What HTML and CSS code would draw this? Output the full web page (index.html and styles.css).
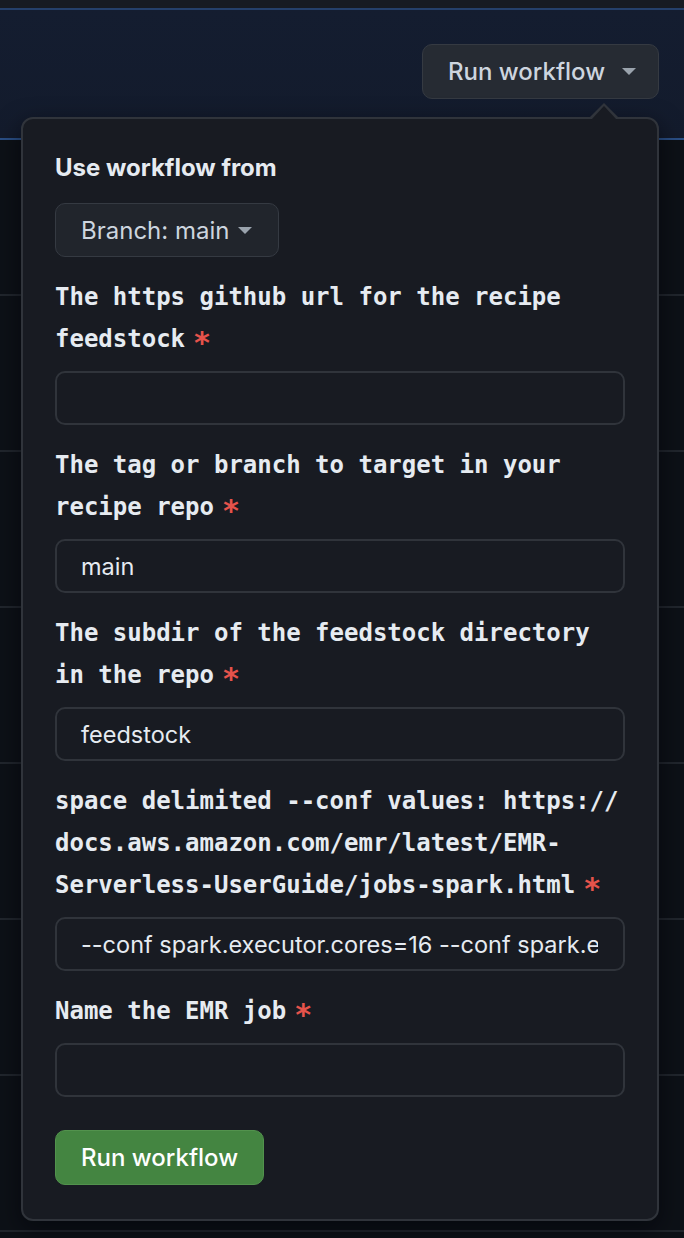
FILE: index.html
```html
<!DOCTYPE html>
<html>
<head>
<meta charset="utf-8">
<link rel="stylesheet" href="styles.css">
</head>
<body>
<div class="topstrip"></div>
<header class="header">
  <button class="btn btn-top">Run workflow<span class="caret"></span></button>
</header>
<div class="rows">
  <div class="row"></div><div class="row"></div><div class="row"></div>
  <div class="row"></div><div class="row"></div><div class="row"></div>
  <div class="row"></div>
</div>

<div class="popover">
  <div class="popover-title">Use workflow from</div>
  <button class="btn btn-branch">Branch: main<span class="caret"></span></button>

  <div class="group">
    <label class="label">The https github url for the recipe feedstock<span class="req">*</span></label>
    <div class="input"></div>
  </div>
  <div class="group">
    <label class="label">The tag or branch to target in your recipe repo<span class="req">*</span></label>
    <div class="input">main</div>
  </div>
  <div class="group">
    <label class="label">The subdir of the feedstock directory in the repo<span class="req">*</span></label>
    <div class="input">feedstock</div>
  </div>
  <div class="group">
    <label class="label">space delimited --conf values: https://<wbr>docs.aws.amazon.com/emr/latest/EMR-<wbr>Serverless-UserGuide/jobs-spark.html<span class="req">*</span></label>
    <div class="input"><span class="clip">--conf spark.executor.cores=16 --conf spark.executor.memory=60G</span></div>
  </div>
  <div class="group">
    <label class="label">Name the EMR job<span class="req">*</span></label>
    <div class="input"></div>
  </div>
  <button class="btn btn-primary">Run workflow</button>
</div>
</body>
</html>
```
FILE: styles.css
```css
html, body {
  margin: 0;
  padding: 0;
}
body {
  width: 684px;
  height: 1238px;
  overflow: hidden;
  background: #0d1117;
  position: relative;
  font-family: Inter, "Liberation Sans", sans-serif;
}
.topstrip {
  height: 8px;
  background: #171b22;
  border-bottom: 2px solid #25406a;
}
.header {
  height: 130px;
  background: linear-gradient(180deg, #141d30 0%, #131b2c 100%);
  border-bottom: 2px solid #2a4f86;
  display: flex;
  justify-content: flex-end;
  align-items: flex-start;
  padding: 34px 25px 0 0;
  box-sizing: border-box;
}
.rows {
  display: flex;
  flex-direction: column;
}
.row {
  height: 154px;
  border-bottom: 2px solid #21262d;
}
.btn {
  font-family: Inter, "Liberation Sans", sans-serif;
  font-size: 24px;
  font-weight: 500;
  border-radius: 10px;
  cursor: pointer;
  display: inline-flex;
  align-items: center;
  box-sizing: border-box;
  padding: 0 25px;
  white-space: nowrap;
}
.btn-top {
  height: 55px;
  width: 237px;
  background: #262b33;
  border: 1px solid #353a42;
  color: #cdd5df;
  padding: 0 24px 0 25px;
}
.caret {
  width: 0;
  height: 0;
  border-left: 7px solid transparent;
  border-right: 7px solid transparent;
  border-top: 7px solid #9aa3ad;
  margin-left: 17px;
}
.popover {
  position: absolute;
  left: 21px;
  top: 117px;
  width: 638px;
  box-sizing: border-box;
  background: #181b22;
  border: 2px solid #30343b;
  border-radius: 12px;
  padding: 28px 32px 34px 32px;
  box-shadow: 0 8px 24px rgba(1, 4, 9, 0.6);
}
.popover::before {
  content: "";
  position: absolute;
  top: -16px;
  left: 566px;
  width: 0;
  height: 0;
  border-left: 15px solid transparent;
  border-right: 15px solid transparent;
  border-bottom: 15px solid #30343b;
}
.popover::after {
  content: "";
  position: absolute;
  top: -13px;
  left: 568px;
  width: 0;
  height: 0;
  border-left: 13px solid transparent;
  border-right: 13px solid transparent;
  border-bottom: 14px solid #181b22;
}
.popover-title {
  font-size: 24px;
  font-weight: 700;
  line-height: 42px;
  color: #e6ebf1;
}
.btn-branch {
  margin-top: 14px;
  height: 54px;
  background: #21252c;
  border: 1px solid #353a42;
  color: #cdd5df;
  font-weight: 400;
  padding: 0 26px 0 25px;
}
.btn-branch .caret {
  margin-left: 9px;
}
.group {
  margin-top: 19px;
  display: flex;
  flex-direction: column;
  gap: 11px;
}
.label {
  font-family: "DejaVu Sans Mono", "Liberation Mono", monospace;
  font-weight: bold;
  font-size: 24px;
  line-height: 42px;
  color: #e6ebf1;
}
.req {
  color: #e5534b;
  margin-left: 8px;
  font-size: 30px;
  vertical-align: -6px;
  line-height: 0;
}
.input {
  height: 54px;
  box-sizing: border-box;
  border: 2px solid #30343b;
  border-radius: 10px;
  padding: 0 25px 0 24px;
  display: flex;
  align-items: center;
  font-size: 23.5px;
  color: #e6ebf1;
  overflow: hidden;
  white-space: nowrap;
}
.clip {
  overflow: hidden;
  display: block;
  width: 100%;
}
.btn-primary {
  margin-top: 33px;
  height: 55px;
  background: #448541;
  border: 1px solid #52924d;
  color: #ffffff;
}
```
